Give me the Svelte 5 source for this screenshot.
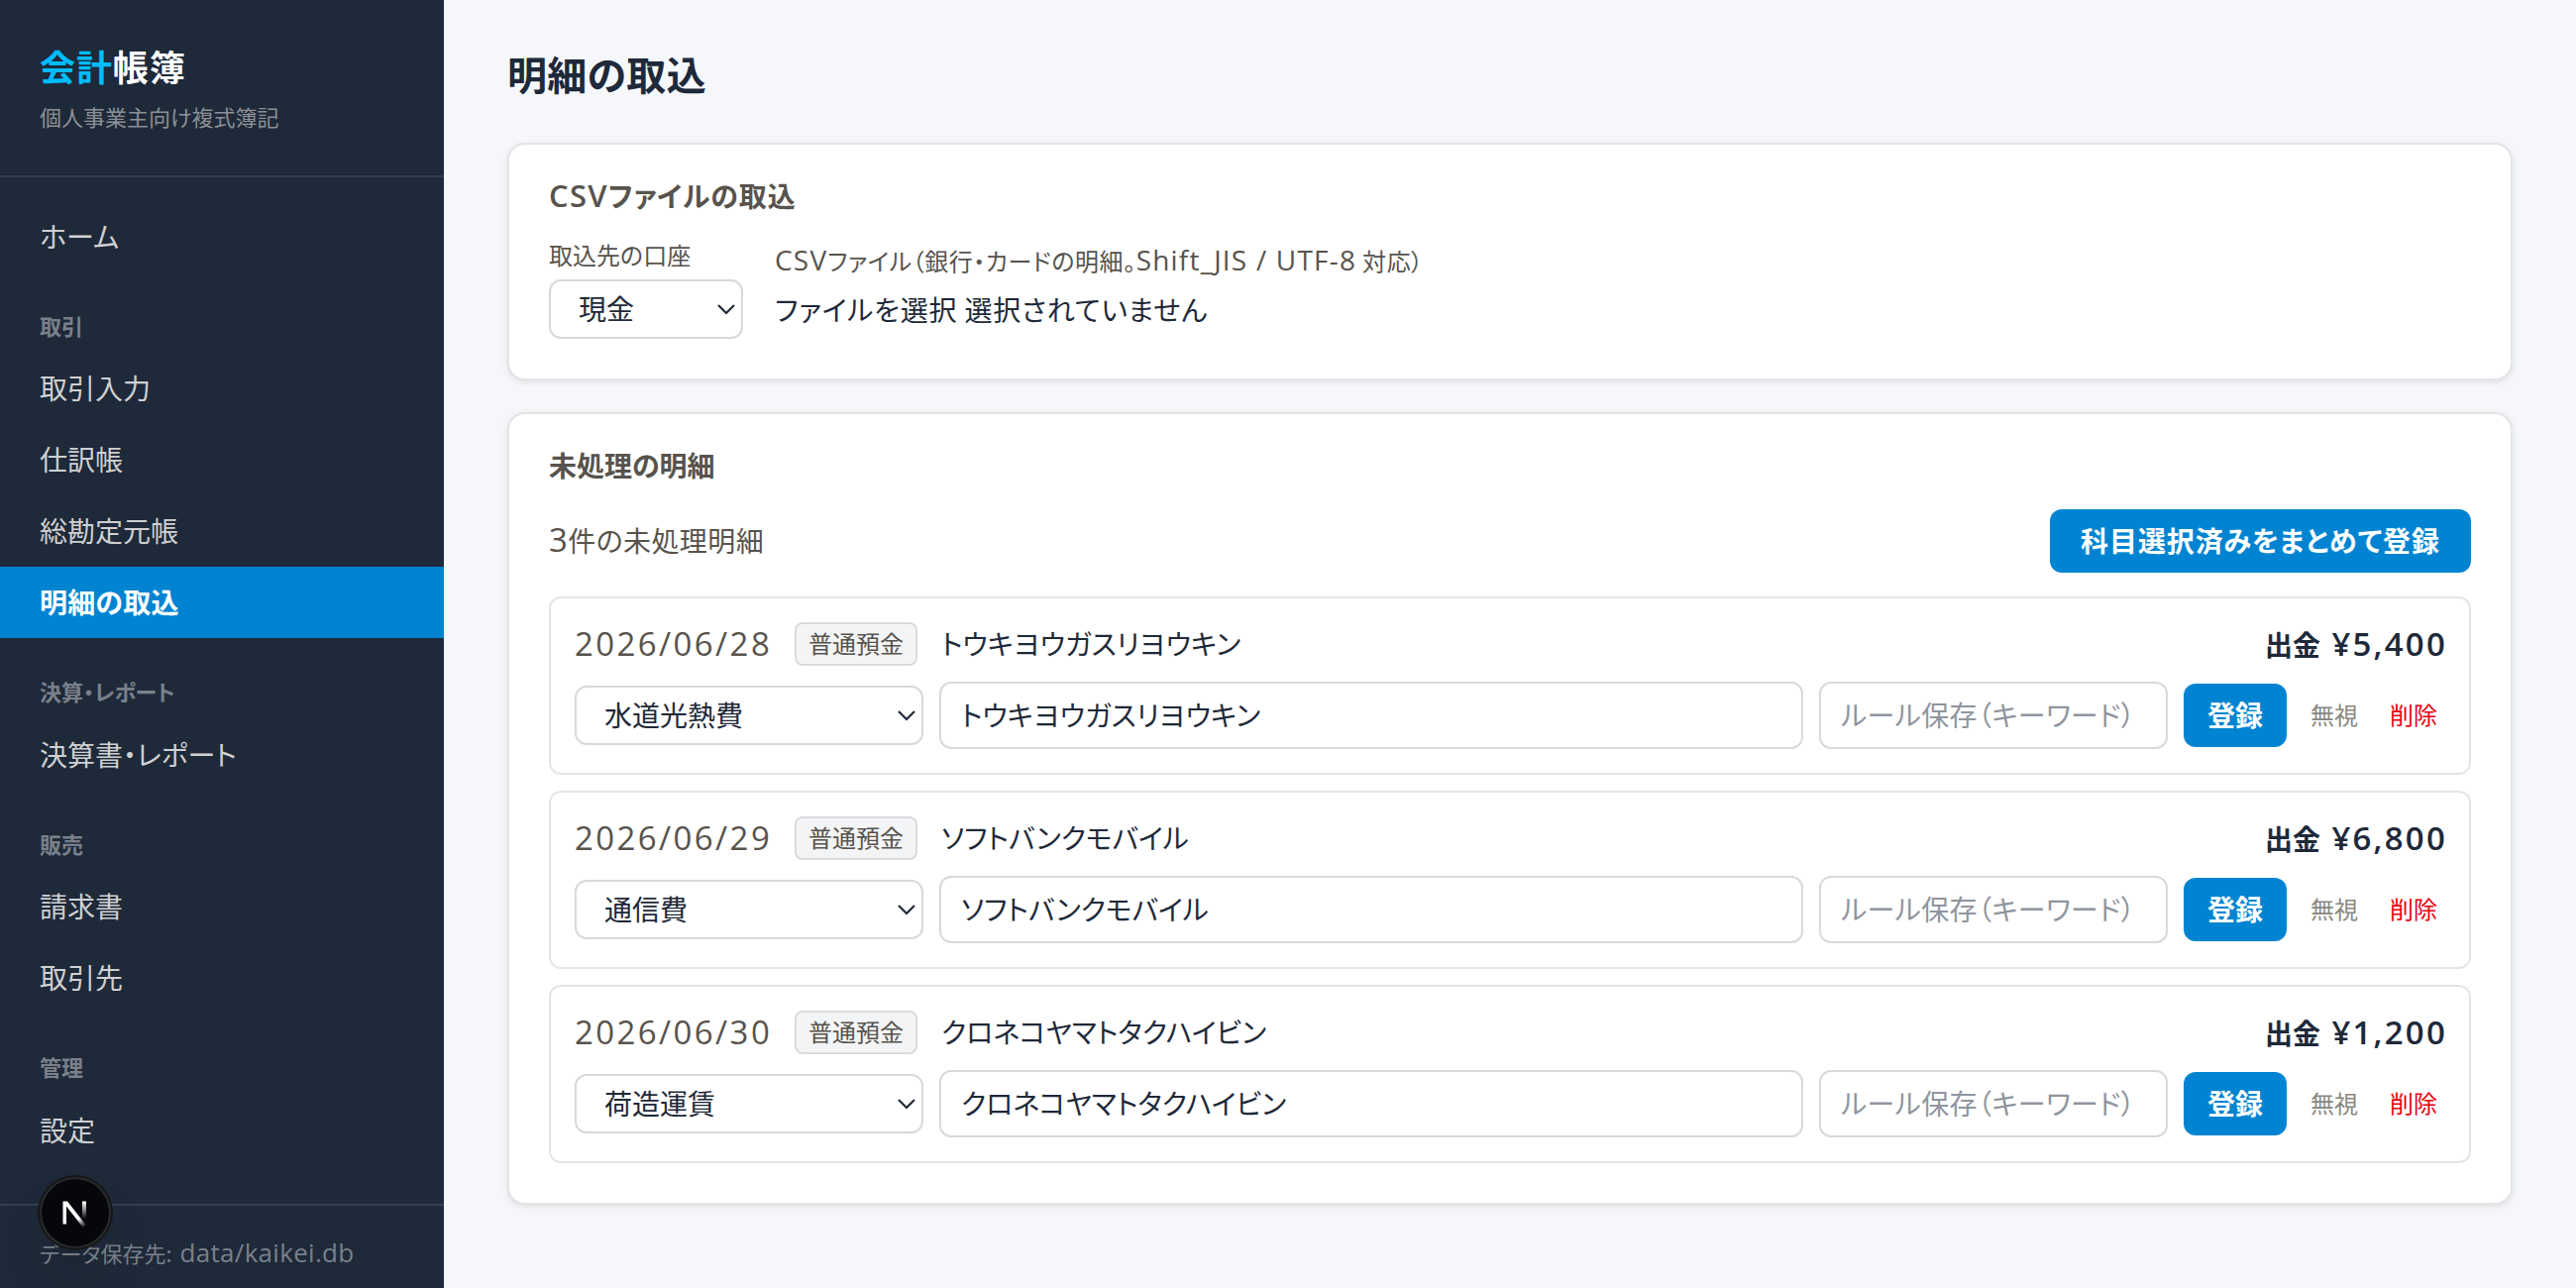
<script lang="ts">
  type NavItem = { label: string; active?: boolean }
  type NavGroup = { title: string; items: NavItem[] }
  type Entry = { date: string; account: string; name: string; category: string; amount: string }

  const groups: NavGroup[] = [
    { title: '', items: [{ label: 'ホーム' }] },
    {
      title: '取引',
      items: [
        { label: '取引入力' },
        { label: '仕訳帳' },
        { label: '総勘定元帳' },
        { label: '明細の取込', active: true },
      ],
    },
    { title: '決算・レポート', items: [{ label: '決算書・レポート' }] },
    { title: '販売', items: [{ label: '請求書' }, { label: '取引先' }] },
    { title: '管理', items: [{ label: '設定' }] },
  ]

  let entries: Entry[] = $state([
    { date: '2026/06/28', account: '普通預金', name: 'トウキヨウガスリヨウキン', category: '水道光熱費', amount: '¥5,400' },
    { date: '2026/06/29', account: '普通預金', name: 'ソフトバンクモバイル', category: '通信費', amount: '¥6,800' },
    { date: '2026/06/30', account: '普通預金', name: 'クロネコヤマトタクハイビン', category: '荷造運賃', amount: '¥1,200' },
  ])

  function removeEntry(entry: Entry) {
    entries = entries.filter(e => e !== entry)
  }
</script>

{#snippet chevron()}
  <svg class="chevron" viewBox="0 0 20 12" aria-hidden="true">
    <path d="M2 2 L10 10 L18 2" fill="none" stroke="currentColor" stroke-width="2.2" />
  </svg>
{/snippet}

<div class="app">
  <aside class="sidebar">
    <header class="brand">
      <div class="brand-name"><span>会計</span>帳簿</div>
      <div class="brand-sub">個人事業主向け複式簿記</div>
    </header>
    <nav class="nav">
      {#each groups as group}
        {#if group.title}
          <div class="nav-title">{group.title}</div>
        {/if}
        {#each group.items as item}
          <a class="nav-item" class:active={item.active} href="#top">{item.label}</a>
        {/each}
      {/each}
    </nav>
    <footer class="storage">データ保存先: <span>data/kaikei.db</span></footer>
    <div class="dev-badge">
      <svg viewBox="0 0 40 40" width="40" height="40" fill="none">
        <defs>
          <linearGradient id="diag" x1="21" y1="22" x2="30" y2="34" gradientUnits="userSpaceOnUse">
            <stop offset="0.3" stop-color="#fff" />
            <stop offset="1" stop-color="#fff" stop-opacity="0" />
          </linearGradient>
          <linearGradient id="stem" x1="29" y1="9" x2="29" y2="26" gradientUnits="userSpaceOnUse">
            <stop stop-color="#fff" />
            <stop offset="1" stop-color="#fff" stop-opacity="0" />
          </linearGradient>
        </defs>
        <path d="M7.5 8.5 H12 L32 34 L29 36.5 L11 13.5 V31.5 H7.5 Z" fill="url(#diag)" />
        <path d="M27 8.5 H31 V25.5 H27 Z" fill="url(#stem)" />
      </svg>
    </div>
  </aside>

  <main class="content">
    <h1>明細の取込</h1>

    <section class="card">
      <h2 class="csv-title"><span>CSV</span>ファイルの取込</h2>
      <div class="import-row">
        <div class="account">
          <div class="label">取込先の口座</div>
          <div class="select">
            <select><option>現金</option></select>
            {@render chevron()}
          </div>
        </div>
        <div class="file">
          <div class="label file-label"><span>CSV</span>ファイル（銀行・カードの明細。<span>Shift_JIS / UTF-8</span> 対応）</div>
          <div class="file-picker">ファイルを選択 選択されていません</div>
        </div>
      </div>
    </section>

    <section class="card">
      <h2>未処理の明細</h2>
      <div class="toolbar">
        <p class="count"><span>{entries.length}</span>件の未処理明細</p>
        <button class="primary bulk">科目選択済みをまとめて登録</button>
      </div>
      <div class="entries">
        {#each entries as entry}
          <article class="entry">
            <div class="entry-head">
              <span class="date">{entry.date}</span>
              <span class="tag">{entry.account}</span>
              <span class="name">{entry.name}</span>
              <span class="amount">出金 <b>{entry.amount}</b></span>
            </div>
            <div class="entry-form">
              <div class="select category">
                <select><option>{entry.category}</option></select>
                {@render chevron()}
              </div>
              <input class="memo" value={entry.name} />
              <input class="rule" placeholder="ルール保存（キーワード）" />
              <button class="primary save">登録</button>
              <button class="link">無視</button>
              <button class="link danger" onclick={() => removeEntry(entry)}>削除</button>
            </div>
          </article>
        {/each}
      </div>
    </section>
  </main>
</div>

<style>
  :global(body) {
    background: #f5f7fb;
  }

  .app {
    display: flex;
    height: 1300px;
    overflow: hidden;
    font-family: 'Noto Sans CJK JP', sans-serif;
    font-feature-settings: 'palt';
    font-size: 28px;
    color: #1e2939;
  }

  .app * {
    box-sizing: border-box;
  }

  button,
  input,
  select {
    font: inherit;
    font-feature-settings: inherit;
    letter-spacing: inherit;
    color: inherit;
    margin: 0;
  }

  /* sidebar */
  .sidebar {
    position: relative;
    display: flex;
    flex-direction: column;
    flex: none;
    width: 448px;
    background: #1e2939;
  }

  .brand {
    height: 179px;
    padding: 38px 40px 0;
    border-bottom: 2px solid #333e4e;
  }

  .brand-name {
    font-size: 36px;
    font-weight: 700;
    line-height: 56px;
    letter-spacing: 0.9px;
    color: #fff;
  }

  .brand-name span {
    color: #00bcff;
  }

  .brand-sub {
    margin-top: 5px;
    font-size: 22px;
    line-height: 36px;
    color: #8c9096;
  }

  .nav {
    flex: 1;
    padding-top: 23.5px;
  }

  .nav-title {
    height: 81.5px;
    padding: 35px 40px 0;
    font-size: 22px;
    font-weight: 700;
    line-height: 36px;
    color: #79808a;
  }

  .nav-item {
    display: block;
    height: 72px;
    padding-left: 40px;
    line-height: 71px;
    color: #cfd0d2;
    text-decoration: none;
  }

  .nav-item.active {
    background: #0084d1;
    color: #fff;
    font-weight: 700;
    letter-spacing: 0.2px;
  }

  .storage {
    height: 85px;
    padding: 29px 40px 0;
    border-top: 2px solid #333e4e;
    font-size: 22px;
    line-height: 36px;
    white-space: nowrap;
    color: #79808a;
  }

  .storage span {
    margin-left: 3px;
    font-family: 'Open Sans', sans-serif;
    font-size: 26px;
    letter-spacing: 0.3px;
  }

  .dev-badge {
    position: absolute;
    left: 40px;
    bottom: 40px;
    display: flex;
    align-items: center;
    justify-content: center;
    width: 72px;
    height: 72px;
    border-radius: 50%;
    background: #05070a;
    box-shadow:
      0 0 0 2px #171717,
      inset 0 0 0 2px #2b2c2f,
      0 32px 64px -16px rgba(0, 0, 0, 0.24);
  }

  /* main */
  .content {
    flex: 1;
    padding: 46px 64px;
  }

  h1 {
    margin: 0 0 42px;
    font-size: 40px;
    font-weight: 700;
    line-height: 56px;
    letter-spacing: 0.3px;
  }

  .card {
    margin-bottom: 32px;
    padding: 39px 40px 40px;
    background: #fff;
    border: 2px solid #e5e5e5;
    border-radius: 18px;
    box-shadow: 0 2px 6px rgba(0, 0, 0, 0.1);
  }

  h2 {
    margin: 0;
    font-size: 28px;
    font-weight: 700;
    line-height: 24px;
    color: #57534d;
  }

  .csv-title {
    letter-spacing: 0.9px;
  }

  .csv-title span {
    font-family: 'Open Sans', sans-serif;
    font-size: 31px;
    font-weight: 600;
    letter-spacing: 1.3px;
  }

  .import-row {
    display: flex;
    gap: 32px;
    margin-top: 30px;
  }

  .account {
    width: 196px;
  }

  .label {
    margin-bottom: 7px;
    font-size: 24px;
    line-height: 36px;
    color: #57534d;
    white-space: nowrap;
  }

  .file-label {
    letter-spacing: 0.55px;
  }

  .file-label span {
    font-family: 'Open Sans', sans-serif;
    font-size: 28px;
    letter-spacing: 1.2px;
  }

  .file {
    padding-top: 5px;
  }

  .file-picker {
    line-height: 48px;
    letter-spacing: 0.8px;
  }

  .select {
    position: relative;
    height: 60px;
  }

  .select select {
    appearance: none;
    width: 100%;
    height: 60px;
    padding: 0 28px 2px;
    background: #fff;
    border: 2px solid #d9d9d9;
    border-radius: 12px;
  }

  .chevron {
    position: absolute;
    right: 7px;
    top: 24px;
    width: 20px;
    height: 12px;
  }

  .toolbar {
    display: flex;
    align-items: center;
    justify-content: space-between;
    margin: 33px 0 24px;
  }

  .count {
    margin: 0 0 3px;
    letter-spacing: 0.4px;
    color: #57534d;
  }

  .count span {
    font-family: 'Open Sans', sans-serif;
    font-size: 33px;
  }

  .primary {
    flex: none;
    height: 64px;
    padding: 0 0 2px;
    border: 0;
    border-radius: 12px;
    background: #0084d1;
    color: #fff;
    font-weight: 700;
  }

  .bulk {
    width: 425px;
    letter-spacing: 0.9px;
  }

  .entries {
    display: flex;
    flex-direction: column;
    gap: 16px;
  }

  .entry {
    padding: 24px;
    border: 2px solid #e5e5e5;
    border-radius: 12px;
  }

  .entry-head {
    display: flex;
    align-items: center;
    height: 44px;
    margin-bottom: 16px;
    line-height: 42px;
  }

  .date {
    width: 222px;
    font-family: 'Open Sans', sans-serif;
    font-size: 33px;
    letter-spacing: 2.4px;
    color: #57534d;
  }

  .tag {
    width: 124px;
    height: 44px;
    margin-right: 24px;
    border: 2px solid #d9dbde;
    border-radius: 8px;
    background: #f3f4f6;
    font-size: 24px;
    line-height: 38px;
    text-align: center;
    color: #57534d;
  }

  .name {
    padding-bottom: 2px;
  }

  .amount {
    margin-right: -2px;
    margin-left: auto;
    font-weight: 700;
  }

  .amount b {
    margin-left: 5px;
    font-family: 'Open Sans', sans-serif;
    font-size: 33px;
    font-weight: 600;
    letter-spacing: 2.2px;
  }

  .entry-form {
    display: flex;
    align-items: center;
    gap: 16px;
    height: 68px;
  }

  .category {
    flex: none;
    width: 352px;
  }

  input {
    height: 68px;
    padding: 0 20px 2px;
    background: #fff;
    border: 2px solid #d9d9d9;
    border-radius: 12px;
  }

  input::placeholder {
    color: #8f959e;
    opacity: 1;
  }

  .memo {
    flex: 1;
    min-width: 0;
  }

  .rule {
    flex: none;
    width: 352px;
    letter-spacing: 0.4px;
  }

  .save {
    width: 104px;
  }

  .link {
    flex: none;
    width: 64px;
    padding: 0 0 3px;
    border: 0;
    background: none;
    font-size: 24px;
    color: #8a8780;
  }

  .link.danger {
    color: #e7000b;
  }
</style>
